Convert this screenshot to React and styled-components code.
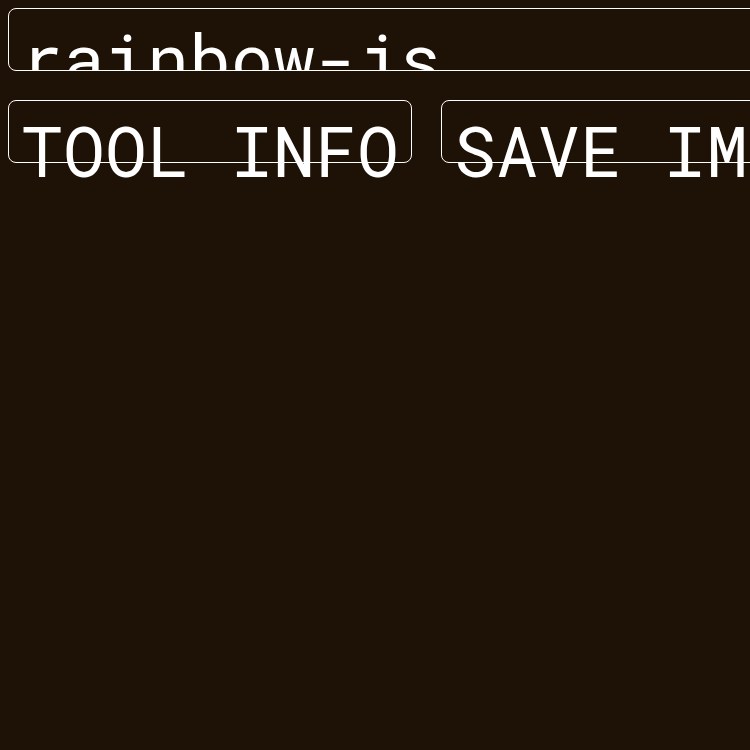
import React from 'react';
import styled, { createGlobalStyle } from 'styled-components';

const Global = createGlobalStyle`
    html {
        background: #1e1105;
    }
    body {
        margin: 0;
        padding: 8px;
        box-sizing: border-box;
        width: max-content;
        min-height: 100vh;
        font-family: 'Roboto Mono', 'DejaVu Sans Mono', 'Liberation Mono', monospace;
        color: #ffffff;
        background: #1e1105;
    }
    #root {
        width: max-content;
        min-height: calc(100vh - 16px);
    }
`

const Page = styled.div`
    display: flex;
    flex-direction: column;
    gap: 29px;
    width: 1100px;
    min-height: calc(100vh - 16px);
`

const Title = styled.div`
    height: 63px;
    box-sizing: border-box;
    border: 1px solid #ffffff;
    border-radius: 8px;
    overflow: hidden;
    padding: 3px 12px 0;
    font-size: 70px;
    white-space: nowrap;
`

const Actions = styled.div`
    display: flex;
    gap: 29px;
`

const Button = styled.div`
    flex: none;
    box-sizing: border-box;
    width: 404px;
    height: 63px;
    padding: 3px 12px 0;
    border: 1px solid #ffffff;
    border-radius: 8px;
    font-size: 70px;
    white-space: nowrap;
    cursor: pointer;
`

const App = () => {
    return (
        <>
            <Global />
            <Page>
                <Title>rainbow-js</Title>
                <Actions>
                    <Button role="button">TOOL INFO</Button>
                    <Button role="button">SAVE IMAGE</Button>
                </Actions>
            </Page>
        </>
    )
}

export default App
